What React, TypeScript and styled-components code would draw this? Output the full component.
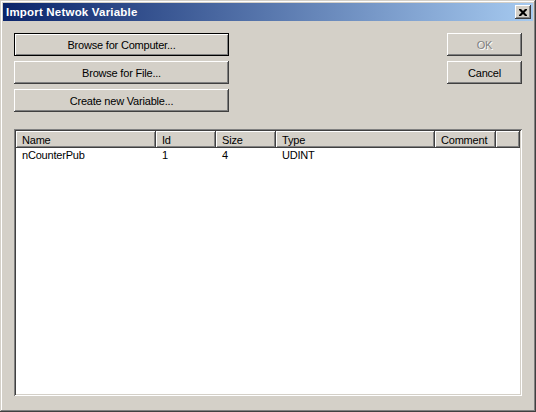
import styled, { createGlobalStyle } from 'styled-components';

const GlobalStyle = createGlobalStyle`
  html, body {
    margin: 0;
    padding: 0;
    background: #d4d0c8;
  }
  * {
    box-sizing: border-box;
  }
`;

const Window = styled.div`
  width: 536px;
  height: 412px;
  padding: 3px;
  display: flex;
  flex-direction: column;
  background: #d4d0c8;
  font-family: "Liberation Sans", Arial, sans-serif;
  font-size: 11px;
  letter-spacing: -0.2px;
  color: #000;
  box-shadow: inset -1px -1px #404040, inset 1px 1px #d4d0c8,
    inset -2px -2px #808080, inset 2px 2px #ffffff;
`;

const TitleBar = styled.div`
  height: 18px;
  display: flex;
  align-items: center;
  justify-content: space-between;
  padding: 0 2px 0 3px;
  background: linear-gradient(to right, #0a246a, #a6caf0);
`;

const Title = styled.span`
  color: #fff;
  font-weight: bold;
  font-size: 11.5px;
  letter-spacing: 0.2px;
`;

const CloseButton = styled.div`
  width: 16px;
  height: 14px;
  display: flex;
  align-items: center;
  justify-content: center;
  background: #d4d0c8;
  box-shadow: inset -1px -1px #404040, inset 1px 1px #ffffff,
    inset -2px -2px #808080;
`;

const Body = styled.div`
  flex: 1;
  display: flex;
  flex-direction: column;
  padding: 12px 11px 13px 11px;
  gap: 17px;
`;

const TopRow = styled.div`
  display: flex;
  justify-content: space-between;
`;

const ButtonColumn = styled.div`
  display: flex;
  flex-direction: column;
  gap: 5px;
`;

const Button = styled.div<{ $width: number; $default?: boolean; $disabled?: boolean }>`
  width: ${(p) => p.$width}px;
  height: 23px;
  display: flex;
  align-items: center;
  justify-content: center;
  background: #d4d0c8;
  color: ${(p) => (p.$disabled ? '#808080' : '#000')};
  text-shadow: ${(p) => (p.$disabled ? '1px 1px #ffffff' : 'none')};
  border: ${(p) => (p.$default ? '1px solid #000' : 'none')};
  box-shadow: ${(p) =>
    p.$default
      ? 'inset 1px 1px #ffffff, inset -1px -1px #808080'
      : 'inset -1px -1px #404040, inset 1px 1px #ffffff, inset -2px -2px #808080'};
`;

const ListView = styled.div`
  flex: 1;
  display: flex;
  flex-direction: column;
  padding: 2px;
  background: #fff;
  box-shadow: inset 1px 1px #808080, inset -1px -1px #ffffff,
    inset 2px 2px #404040, inset -2px -2px #d4d0c8;
`;

const HeaderRow = styled.div`
  display: flex;
  height: 17px;
`;

const HeaderCell = styled.div<{ $width?: number }>`
  width: ${(p) => (p.$width ? `${p.$width}px` : 'auto')};
  flex: ${(p) => (p.$width ? 'none' : '1')};
  display: flex;
  align-items: center;
  padding-left: 6px;
  background: #d4d0c8;
  white-space: nowrap;
  box-shadow: inset -1px -1px #404040, inset 1px 1px #ffffff,
    inset -2px -2px #808080;
`;

const Row = styled.div`
  display: flex;
  height: 14px;
  align-items: center;
`;

const Cell = styled.div<{ $width: number }>`
  width: ${(p) => p.$width}px;
  padding-left: 6px;
  white-space: nowrap;
`;

const columns = [
  { name: 'Name', width: 140 },
  { name: 'Id', width: 60 },
  { name: 'Size', width: 60 },
  { name: 'Type', width: 159 },
  { name: 'Comment', width: 61 },
];

const rows = [['nCounterPub', '1', '4', 'UDINT', '']];

export default function App() {
  return (
    <>
      <GlobalStyle />
      <Window>
        <TitleBar>
          <Title>Import Netwok Variable</Title>
          <CloseButton>
            <svg width="8" height="7" viewBox="0 0 8 7">
              <path
                d="M0 0h2l2 2 2-2h2v1L5.5 3.5 8 6v1H6L4 5 2 7H0V6l2.5-2.5L0 1z"
                fill="#000"
              />
            </svg>
          </CloseButton>
        </TitleBar>
        <Body>
          <TopRow>
            <ButtonColumn>
              <Button $width={215} $default>Browse for Computer...</Button>
              <Button $width={215}>Browse for File...</Button>
              <Button $width={215}>Create new Variable...</Button>
            </ButtonColumn>
            <ButtonColumn>
              <Button $width={75} $disabled>OK</Button>
              <Button $width={75}>Cancel</Button>
            </ButtonColumn>
          </TopRow>
          <ListView>
            <HeaderRow>
              {columns.map((c) => (
                <HeaderCell key={c.name} $width={c.width}>
                  {c.name}
                </HeaderCell>
              ))}
              <HeaderCell />
            </HeaderRow>
            {rows.map((r, i) => (
              <Row key={i}>
                {r.map((v, j) => (
                  <Cell key={j} $width={columns[j].width}>
                    {v}
                  </Cell>
                ))}
              </Row>
            ))}
          </ListView>
        </Body>
      </Window>
    </>
  );
}
